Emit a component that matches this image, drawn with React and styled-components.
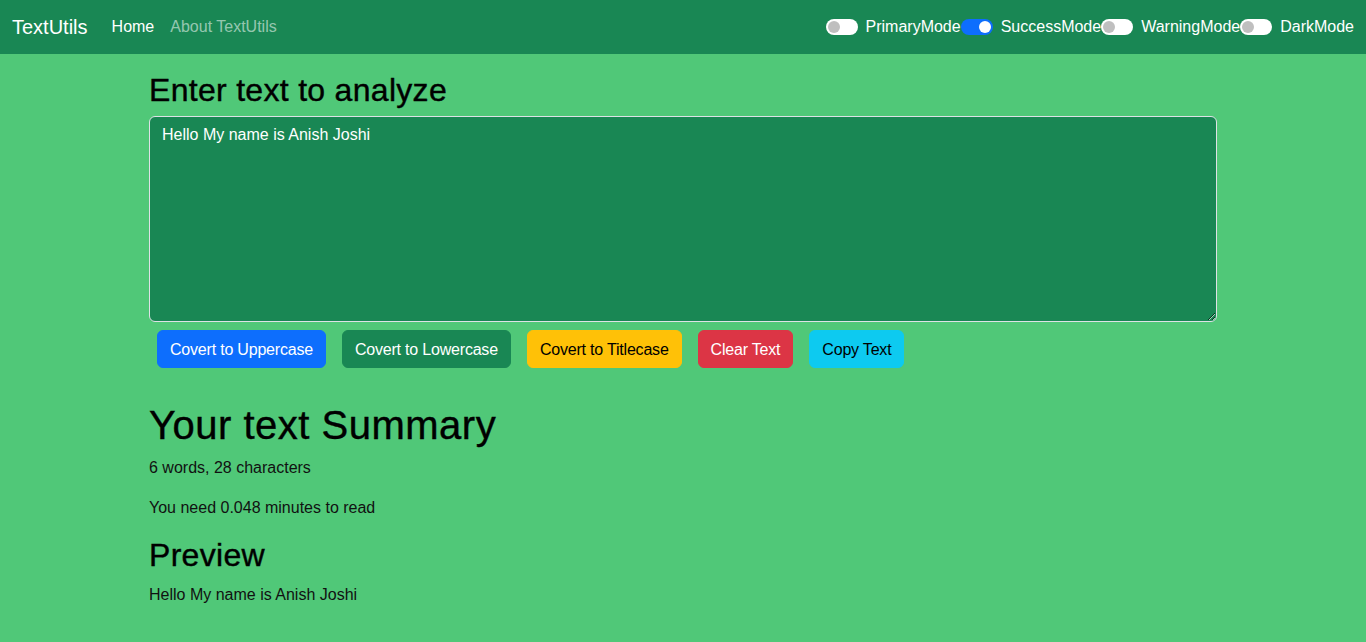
import { useState } from "react"
import styled, { createGlobalStyle } from "styled-components"

const GlobalStyle = createGlobalStyle`
  *, *::before, *::after { box-sizing: border-box; }
  body {
    margin: 0;
    font-family: "Segoe UI", "Liberation Sans", Arial, sans-serif;
    font-size: 16px;
    line-height: 1.5;
    background-color: #50c878;
    color: #000;
  }
`

const Navbar = styled.nav`
  height: 54px;
  padding: 0 12px;
  background-color: #198754;
  display: flex;
  align-items: center;
  justify-content: space-between;
`

const Brand = styled.a`
  font-size: 20px;
  color: #fff;
  text-decoration: none;
  margin-right: 16px;
`

const NavLeft = styled.div`
  display: flex;
  align-items: center;
`

const NavList = styled.ul`
  list-style: none;
  margin: 0;
  padding: 0;
  display: flex;
`

const NavItem = styled.a`
  display: block;
  padding: 8px;
  color: ${({ $active }) => ($active ? "#fff" : "rgba(255,255,255,0.55)")};
  text-decoration: none;
  cursor: pointer;
`

const Switches = styled.div`
  display: flex;
  align-items: center;
`

const SwitchItem = styled.label`
  display: flex;
  align-items: center;
  color: #fff;
  cursor: pointer;
`

const Track = styled.span`
  width: 32px;
  height: 16px;
  border-radius: 8px;
  margin-right: 8px;
  background-color: ${({ $on }) => ($on ? "#0d6efd" : "#fff")};
  display: flex;
  align-items: center;
  justify-content: ${({ $on }) => ($on ? "flex-end" : "flex-start")};
  padding: 0 2px;
`

const Knob = styled.span`
  width: 12px;
  height: 12px;
  border-radius: 50%;
  background-color: ${({ $on }) => ($on ? "#fff" : "#bfbfbf")};
`

const Container = styled.main`
  width: 1068px;
  margin: 0 auto;
  padding-top: 17px;
`

const Heading = styled.h2`
  font-size: ${({ $size }) => $size}px;
  font-weight: 500;
  line-height: 1.2;
  letter-spacing: ${({ $size }) => ($size > 32 ? 0.5 : 0.3)}px;
  -webkit-text-stroke: 0.4px #000;
  margin: ${({ $top }) => $top || 0}px 0 ${({ $bottom }) => $bottom ?? 8}px;
`

const TextArea = styled.textarea`
  display: block;
  width: 100%;
  height: 206px;
  padding: 6px 12px;
  font-family: inherit;
  font-size: 16px;
  line-height: 1.5;
  color: #fff;
  background-color: #198754;
  border: 1px solid #dee2e6;
  border-radius: 6px;
  outline: none;
`

const ButtonRow = styled.div`
  display: flex;
  margin-top: 8px;
`

const colors = {
  primary: ["#0d6efd", "#fff"],
  success: ["#198754", "#fff"],
  warning: ["#ffc107", "#000"],
  danger: ["#dc3545", "#fff"],
  info: ["#0dcaf0", "#000"],
}

const Button = styled.button`
  margin: 0 8px;
  padding: 7px 12px 5px;
  height: 38px;
  font-family: inherit;
  font-size: 16px;
  line-height: 1.5;
  letter-spacing: -0.2px;
  border: 1px solid ${({ $v }) => colors[$v][0]};
  border-radius: 6px;
  background-color: ${({ $v }) => colors[$v][0]};
  color: ${({ $v }) => colors[$v][1]};
  cursor: pointer;
`

const Para = styled.p`
  margin: 0 0 16px;
  color: #111;
`

const modes = [
  ["PrimaryMode", false],
  ["SuccessMode", true],
  ["WarningMode", false],
  ["DarkMode", false],
]

export default function App() {
  const [text, setText] = useState("Hello My name is Anish Joshi")
  const words = text.split(/\s+/).filter((w) => w.length).length

  return (
    <>
      <GlobalStyle />
      <Navbar>
        <NavLeft>
          <Brand href="#">TextUtils</Brand>
          <NavList>
            <li><NavItem $active>Home</NavItem></li>
            <li><NavItem>About TextUtils</NavItem></li>
          </NavList>
        </NavLeft>
        <Switches>
          {modes.map(([name, on]) => (
            <SwitchItem key={name}>
              <Track $on={on}><Knob $on={on} /></Track>
              {name}
            </SwitchItem>
          ))}
        </Switches>
      </Navbar>
      <Container>
        <Heading $size={32} $bottom={7}>Enter text to analyze</Heading>
        <TextArea value={text} onChange={(e) => setText(e.target.value)} />
        <ButtonRow>
          <Button $v="primary">Covert to Uppercase</Button>
          <Button $v="success">Covert to Lowercase</Button>
          <Button $v="warning">Covert to Titlecase</Button>
          <Button $v="danger">Clear Text</Button>
          <Button $v="info">Copy Text</Button>
        </ButtonRow>
        <Heading as="h1" $size={40} $top={33} $bottom={7}>Your text Summary</Heading>
        <Para>{words} words, {text.length} characters</Para>
        <Para>You need {(0.008 * words).toFixed(3)} minutes to read</Para>
        <Heading $size={32}>Preview</Heading>
        <Para>{text}</Para>
      </Container>
    </>
  )
}
